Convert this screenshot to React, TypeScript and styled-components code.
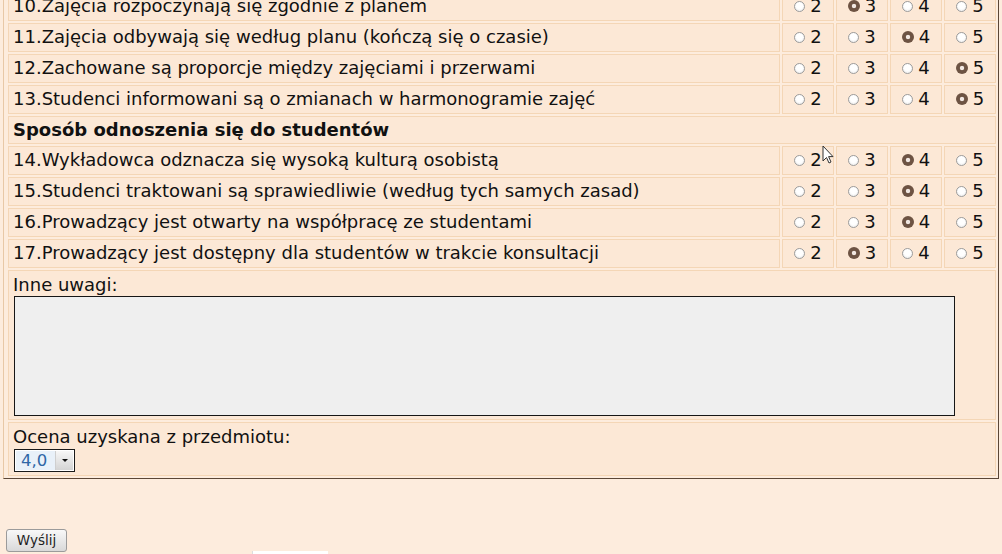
import React from 'react';
import styled, { createGlobalStyle } from 'styled-components';

const Global = createGlobalStyle`
  html, body { margin: 0; padding: 0; background: #fdecdd; overflow: hidden; }
  body { font-family: "DejaVu Sans", Verdana, sans-serif; color: #111; }
`;

const Page = styled.div`
  position: relative;
  height: 554px;
  overflow: hidden;
`;

const Panel = styled.div`
  margin: -10px 3px 0 3px;
  padding: 0 0 0 2px;
  border-left: 1px solid #e8c8a6;
  border-right: 1px solid #5b4637;
  border-bottom: 1px solid #5b4637;
`;

const Table = styled.table`
  width: 100%;
  border-collapse: separate;
  border-spacing: 2px;
  table-layout: fixed;
  font-size: 18px;
`;

const Cell = styled.td`
  box-sizing: border-box;
  border: 1px solid #f4d6b6;
  background: #fce8d6;
  padding: 2px 4px;
  line-height: 22.6px;
  white-space: nowrap;
`;

const QuestionCell = styled(Cell)``;

const OptionCell = styled(Cell)`
  text-align: center;
  padding: 2px 0;
`;

const SectionCell = styled(Cell)`
  font-weight: bold;
`;

const BlockCell = styled(Cell)<{ $pad?: string }>`
  padding: ${(p) => p.$pad || '3px 5px'};
  line-height: 21px;
`;

const OptionLabel = styled.label`
  display: inline-flex;
  align-items: center;
  gap: 5px;
`;

const Radio = styled.input.attrs({ type: 'radio' })`
  appearance: none;
  -webkit-appearance: none;
  margin: 0;
  width: 11px;
  height: 11px;
  box-sizing: border-box;
  border-radius: 50%;
  border: 1px solid #9c9c9c;
  background: radial-gradient(circle at 50% 40%, #ffffff 0 3px, #ececec 6px);
  &:checked {
    border: none;
    width: 12px;
    height: 12px;
    background: radial-gradient(circle, #f1e7e1 0 1.8px, #6d5343 2.6px);
  }
`;

const FieldLabel = styled.div`
  line-height: 21px;
`;

const TextArea = styled.textarea`
  display: block;
  box-sizing: border-box;
  margin: 1px 0 0 1px;
  width: 941px;
  height: 120px;
  border: 1px solid #161616;
  background: #efefef;
  resize: none;
  font: inherit;
`;

const SelectBox = styled.div`
  display: flex;
  margin: 2px 0 0 1px;
  width: 61px;
  height: 23px;
  box-sizing: border-box;
  border: 1px solid #1a1a1a;
  background: #fff;
`;

const SelectValue = styled.span`
  flex: 1;
  margin: 1px 0 1px 1px;
  background: #e9f1f9;
  color: #2f67a6;
  font-size: 16.5px;
  line-height: 19px;
  padding-left: 5px;
`;

const SelectArrow = styled.span`
  width: 17px;
  margin: 1px 1px 1px 0;
  display: flex;
  align-items: center;
  justify-content: center;
  background: linear-gradient(#f7f7f7, #d4d4d4);
  border-left: 1px solid #cfcfcf;
  &::after {
    content: '';
    border-left: 3px solid transparent;
    border-right: 3px solid transparent;
    border-top: 3.5px solid #111;
  }
`;

const SubmitButton = styled.button`
  display: block;
  margin: 50px 0 0 6px;
  width: 61px;
  height: 23px;
  padding: 0;
  box-sizing: border-box;
  font-family: "DejaVu Sans", Verdana, sans-serif;
  font-size: 13.5px;
  color: #1e1e1e;
  background: linear-gradient(#f8f8f8, #d9d9d9);
  border: 1px solid #9b9b9b;
  border-radius: 3px;
`;

const FooterImage = styled.div`
  margin: -1px 0 0 252px;
  width: 75px;
  height: 20px;
  background: #fff;
  border-left: 1px solid #ddd;
`;

const Cursor = styled.svg`
  position: absolute;
  left: 822px;
  top: 145px;
  pointer-events: none;
`;

type Row = { kind: 'q'; text: string; checked: number } | { kind: 's'; text: string };

const rows: Row[] = [
  { kind: 'q', text: '10.Zajęcia rozpoczynają się zgodnie z planem', checked: 3 },
  { kind: 'q', text: '11.Zajęcia odbywają się według planu (kończą się o czasie)', checked: 4 },
  { kind: 'q', text: '12.Zachowane są proporcje między zajęciami i przerwami', checked: 5 },
  { kind: 'q', text: '13.Studenci informowani są o zmianach w harmonogramie zajęć', checked: 5 },
  { kind: 's', text: 'Sposób odnoszenia się do studentów' },
  { kind: 'q', text: '14.Wykładowca odznacza się wysoką kulturą osobistą', checked: 4 },
  { kind: 'q', text: '15.Studenci traktowani są sprawiedliwie (według tych samych zasad)', checked: 4 },
  { kind: 'q', text: '16.Prowadzący jest otwarty na współpracę ze studentami', checked: 4 },
  { kind: 'q', text: '17.Prowadzący jest dostępny dla studentów w trakcie konsultacji', checked: 3 },
];

const options = [2, 3, 4, 5];

export default function App() {
  return (
    <Page>
      <Global />
      <Panel>
        <Table>
          <colgroup>
            <col />
            <col style={{ width: 52 }} />
            <col style={{ width: 52 }} />
            <col style={{ width: 52 }} />
            <col style={{ width: 52 }} />
          </colgroup>
          <tbody>
            {rows.map((r, i) =>
              r.kind === 's' ? (
                <tr key={i}>
                  <SectionCell colSpan={5}>{r.text}</SectionCell>
                </tr>
              ) : (
                <tr key={i}>
                  <QuestionCell>{r.text}</QuestionCell>
                  {options.map((o) => (
                    <OptionCell key={o}>
                      <OptionLabel>
                        <Radio name={`q${i}`} defaultChecked={r.checked === o} readOnly />
                        {o}
                      </OptionLabel>
                    </OptionCell>
                  ))}
                </tr>
              )
            )}
            <tr>
              <BlockCell colSpan={5} $pad="3px 4px 3px 4px">
                <FieldLabel>Inne uwagi:</FieldLabel>
                <TextArea />
              </BlockCell>
            </tr>
            <tr>
              <BlockCell colSpan={5} $pad="3px 4px 3px 4px">
                <FieldLabel>Ocena uzyskana z przedmiotu:</FieldLabel>
                <SelectBox>
                  <SelectValue>4,0</SelectValue>
                  <SelectArrow />
                </SelectBox>
              </BlockCell>
            </tr>
          </tbody>
        </Table>
      </Panel>
      <SubmitButton>Wyślij</SubmitButton>
      <FooterImage />
      <Cursor width="13" height="20" viewBox="0 0 13 20">
        <path d="M1 1 L1 16 L4.5 12.5 L7 18 L9 17 L6.6 11.6 L11 11.6 Z" fill="#fff" stroke="#333" strokeWidth="1" strokeLinejoin="round" />
      </Cursor>
    </Page>
  );
}
